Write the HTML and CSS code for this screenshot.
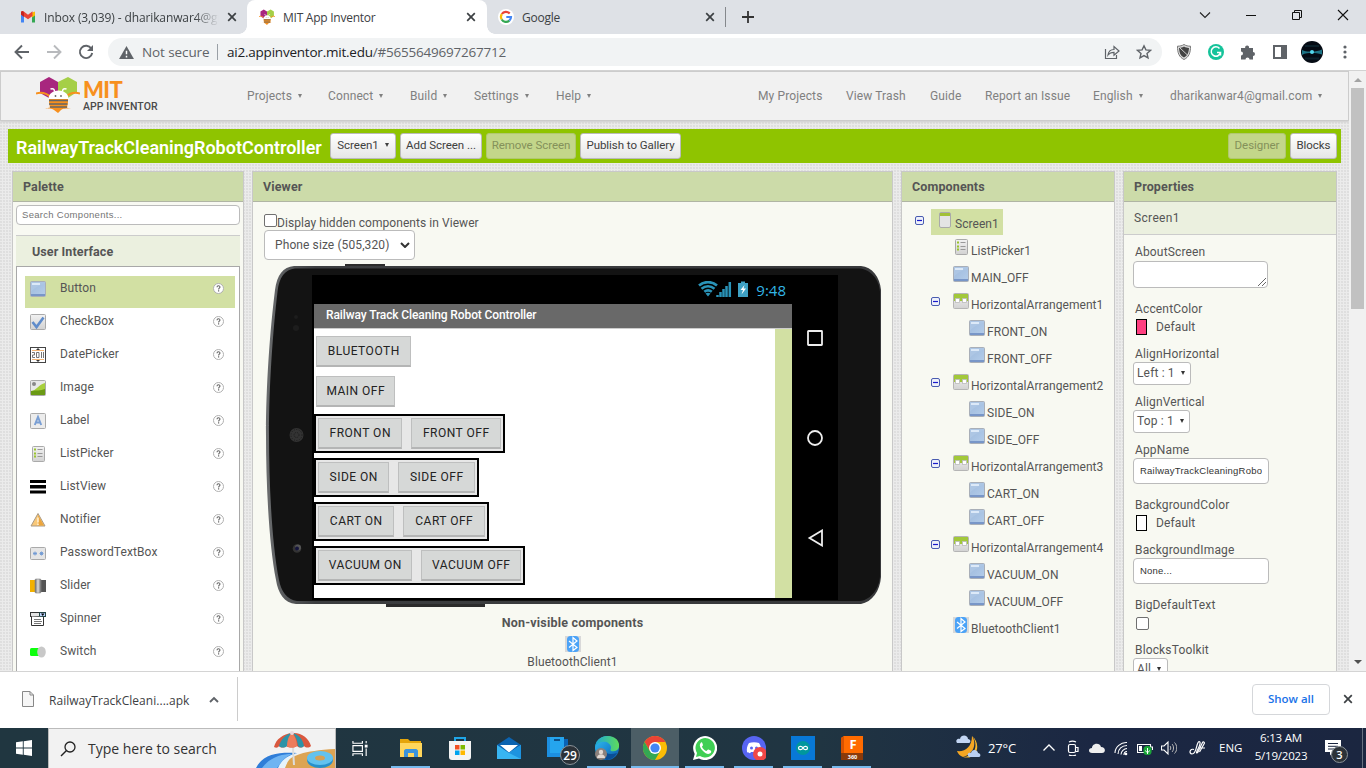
FILE: index.html
```html
<!DOCTYPE html>
<html lang="en">
<head>
<meta charset="utf-8">
<title>MIT App Inventor</title>
<link rel="stylesheet" href="styles.css">
</head>
<body>
<svg class="defs" width="0" height="0">
  <defs>
    <linearGradient id="gBlue" x1="0" y1="0" x2="1" y2="1"><stop offset="0" stop-color="#9db9dc"/><stop offset="1" stop-color="#b4cdea"/></linearGradient>
    <linearGradient id="gGray" x1="0" y1="0" x2="0" y2="1"><stop offset="0" stop-color="#f2f2f2"/><stop offset="1" stop-color="#d2d2d2"/></linearGradient>
    <linearGradient id="gEdge" x1="0" y1="0" x2="1" y2="1"><stop offset="0" stop-color="#35c1f1"/><stop offset=".5" stop-color="#1b8fd6"/><stop offset="1" stop-color="#0c59a4"/></linearGradient>
    <linearGradient id="gEdge2" x1="0" y1="0" x2="1" y2="0"><stop offset="0" stop-color="#1ba7d8"/><stop offset="1" stop-color="#5fdc5a"/></linearGradient>
    <linearGradient id="gMetal" x1="0" y1="0" x2="1" y2="0"><stop offset="0" stop-color="#666"/><stop offset=".5" stop-color="#ddd"/><stop offset="1" stop-color="#666"/></linearGradient>
    <linearGradient id="gRim" x1="0" y1="0" x2="1" y2="0"><stop offset="0" stop-color="#6a6c6e"/><stop offset=".08" stop-color="#3c3e40"/><stop offset="1" stop-color="#38393b"/></linearGradient>
    <symbol id="close" viewBox="0 0 10 10"><path d="M1.2 1.2l7.6 7.6M8.8 1.2L1.2 8.8" stroke="currentColor" stroke-width="1.7" fill="none"/></symbol>
    <symbol id="button" viewBox="0 0 16 16"><rect x=".5" y=".5" width="15" height="15" rx="1" fill="url(#gBlue)" stroke="#a9afb8"/><path d="M1 1h14v2C9 4 4 7 1 11z" fill="#adc6e4"/><path d="M2 2h8v2H2z" fill="#dce9f8"/><path d="M1 13h14v2H1z" fill="#7896c8"/></symbol>
    <symbol id="listpicker" viewBox="0 0 16 16"><rect x="2.5" y=".5" width="12" height="15" rx="1" fill="url(#gGray)" stroke="#aaa"/><path d="M4 3.500h2M4 7.500h2M4 10.500h2" stroke="#9ac52c" stroke-width="2"/><path d="M7.500 3.500h5M7.500 7.500h5M7.500 10.500h5" stroke="#999"/></symbol>
    <symbol id="harr" viewBox="0 0 16 16"><rect x=".5" y=".5" width="15" height="15" rx="1" fill="url(#gGray)" stroke="#b5b5b5"/><path d="M1 1h14v7H1z" fill="#a2c83a"/><rect x="2.500" y="5.500" width="4" height="4" fill="#fff" stroke="#bbb" stroke-width=".8"/><rect x="9.500" y="5.500" width="4" height="4" fill="#fff" stroke="#bbb" stroke-width=".8"/></symbol>
    <symbol id="screen" viewBox="0 0 16 16"><rect x="2.500" y=".5" width="11" height="15" rx="1.500" fill="#e4e4e4" stroke="#aaa"/><path d="M3 1h10v3H3z" fill="#a2c037"/></symbol>
    <symbol id="bt" viewBox="0 0 16 16"><path d="M0 0h16v16H0z" fill="#d9d9d9"/><rect x="2" y="0" width="12" height="16" rx="3.500" fill="#4ba3f7"/><path d="M4 5l8 6.500L8 14.500v-13L12 5l-8 6.500" fill="none" stroke="#fff" stroke-width="1.200"/></symbol>
    <symbol id="minus" viewBox="0 0 9 9"><rect x=".5" y=".5" width="8" height="8" rx="1.500" fill="#eef1fa" stroke="#4a5cb0"/><path d="M2 4.500h5" stroke="#1a1acc" stroke-width="1.200"/></symbol>
    <symbol id="checkbox" viewBox="0 0 16 16"><rect x=".5" y=".5" width="15" height="15" rx="1" fill="url(#gGray)" stroke="#aaa"/><path d="M2.500 8l4 5L13.500 3.500" fill="none" stroke="#5f8ccb" stroke-width="2.600"/></symbol>
    <symbol id="datepicker" viewBox="0 0 16 16"><rect x=".5" y=".5" width="15" height="15" fill="#fff" stroke="#444"/><path d="M2 3.500h12M2 12.500h12" stroke="#f4b677"/><path d="M6 3l2-2 2 2zM6 13l2 2 2-2z" fill="#333"/><path d="M2 5.500h2.500V8H2.500v2.500H5M6.500 5.500h2.500v5H6.500zM11.500 5v6M13.500 5v6" stroke="#777" fill="none"/></symbol>
    <symbol id="image" viewBox="0 0 16 16"><rect x=".5" y=".5" width="15" height="15" rx="1" fill="#e8e8e8" stroke="#aaa"/><circle cx="4" cy="4" r="2" fill="#888"/><path d="M1 11c5 0 8-7 14-8v12H1z" fill="#a7cf3c"/><path d="M1 11c6-1 9 0 14-2v6H1z" fill="#6b9a15"/></symbol>
    <symbol id="label" viewBox="0 0 16 16"><rect x=".5" y=".5" width="15" height="15" rx="1" fill="#ececec" stroke="#aaa"/><path d="M4.800 12L8 4l3.200 8M6 9.500h4" fill="none" stroke="#7a9fd4" stroke-width="2"/></symbol>
    <symbol id="listview" viewBox="0 0 16 16"><path d="M0 1h16v3H0zM0 6h16v3.500H0zM0 11.500h16v3H0z"/></symbol>
    <symbol id="notifier" viewBox="0 0 16 16"><path d="M8 1.500L1 14h14z" fill="#f9c878" stroke="#a99a86" stroke-linejoin="round"/><path d="M8 3l6 10.500H8z" fill="#eca53c"/><path d="M8 5.500v5M8 11.500v1.500" stroke="#fff1d8" stroke-width="1.500"/></symbol>
    <symbol id="password" viewBox="0 0 16 16"><rect x=".5" y="2.500" width="15" height="12" rx="1" fill="#e5e5e5" stroke="#aaa"/><path d="M3 8.500h4M5 6.500v4M3.500 7l3 3M6.500 7l-3 3M9.500 8.500h4M11.500 6.500v4M10 7l3 3M13 7l-3 3" stroke="#6f98d2" stroke-width=".9"/></symbol>
    <symbol id="slider" viewBox="0 0 16 16"><path d="M0 2h5v12H0z" fill="#f2b100"/><path d="M11 2h5v12h-5z" fill="#555"/><rect x="5" y="1" width="6" height="14" rx="1" fill="url(#gMetal)" stroke="#888" stroke-width=".6"/></symbol>
    <symbol id="spinner" viewBox="0 0 16 16"><rect x=".5" y="1.500" width="15" height="4" fill="#e3e3e3" stroke="#333"/><path d="M9 1h7v5H9z" fill="#244"/><path d="M10 2h5v3h-5z" fill="#bdd5ff"/><path d="M11 2.500h3.500L12.700 5z" fill="#000"/><path d="M1.500 5.500v9h12V6" fill="#fff" stroke="#333"/><path d="M4 8.500h7M4 10.500h8M4 12.500h7" stroke="#777"/></symbol>
    <symbol id="switch" viewBox="0 0 16 16"><rect x="0" y="4" width="12" height="8" rx="1.500" fill="#0dff0d"/><ellipse cx="11.500" cy="8" rx="4.300" ry="5.500" fill="#c8c8c8"/></symbol>
    <symbol id="help" viewBox="0 0 11 11"><circle cx="5.500" cy="5.500" r="5" fill="#fff" stroke="#b0b0b0"/><path d="M4 4.300c0-2 3-2 3-.2 0 1.100-1.400 1.100-1.400 2.300" fill="none" stroke="#666" stroke-width="1.100"/><path d="M5 7.300h1.200v1.200H5z" fill="#666"/></symbol>
    <symbol id="bee" viewBox="0 0 44 37" preserveAspectRatio="none"><path d="M13 1l9 5v10l-9 6-9-5V6z" fill="#a8267e"/><path d="M32 1l9 5v10l-9 6-10-6V6z" fill="#a5cf47"/><path d="M0 17.500c7-2 11 0 15 4M44 17.500c-7-2-11 0-15 4" fill="none" stroke="#f7901e" stroke-width="2"/><path d="M9 32c4 0 7 0 8-4h10c2 4 4 4 8 4-5 1-8 0-10 2l-3 3-4-3c-2-2-6-1-9-2z" fill="#f7901e"/><path d="M13 23h19v3l-1 6H14l-1-6z" fill="#f7901e"/><path d="M13 24.500h19M13 28h18.500M14 31h17" stroke="#666" stroke-width="1.400"/><path d="M12.500 23c0-11.500 20-11.500 20 0z" fill="#fff"/><path d="M18.500 15.500c0-2-1-3.500-4-2.500M26.500 15.500c0-2 1-3.500 4-2.500" fill="none" stroke="#fff" stroke-width="1.400"/><circle cx="19.500" cy="20" r=".9" fill="#666"/><circle cx="25" cy="20" r=".9" fill="#666"/></symbol>
  </defs>
</svg>

<header class="tabs">
  <div class="tab">
    <svg class="fav" viewBox="0 0 16 16"><path d="M1 3.500v10h3V7.500z" fill="#4285f4"/><path d="M15 3.500v10h-3V7.500z" fill="#34a853"/><path d="M12 3.500l3-1v4l-3 2z" fill="#fbbc04"/><path d="M1 3c0-1 1.500-1.500 2.500-.700L8 5.700l4.500-3.400V7L8 10.300 1 5.500z" fill="#ea4335"/><path d="M1 3v2.500L4 8V3.500L2.500 2z" fill="#c5221f"/></svg>
    <span class="tab-title inbox">Inbox (3,039) - dharikanwar4@gm</span>
    <svg class="x"><use href="#close"/></svg>
  </div>
  <div class="tab active">
    <svg class="fav"><use href="#bee"/></svg>
    <span class="tab-title">MIT App Inventor</span>
    <svg class="x"><use href="#close"/></svg>
  </div>
  <div class="tab google">
    <svg class="fav" viewBox="0 0 16 16"><circle cx="8" cy="8" r="8" fill="#fff"/><g fill="none" stroke-width="2.200"><path d="M3.800 5A5 5 0 0 1 11.700 4.500" stroke="#ea4335"/><path d="M3.700 10.500A5 5 0 0 1 3.800 5.200" stroke="#fbbc05"/><path d="M3.700 10.500A5 5 0 0 0 11.300 11.700" stroke="#34a853"/><path d="M11.300 11.700A5 5 0 0 0 13 8H8.300" stroke="#4285f4"/></g></svg>
    <span class="tab-title">Google</span>
    <svg class="x"><use href="#close"/></svg>
  </div>
  <span class="tab-sep"></span>
  <svg class="plus" viewBox="0 0 12 12"><path d="M6 0v12M0 6h12" stroke="#333" stroke-width="1.800"/></svg>
  <div class="win">
    <svg viewBox="0 0 12 12"><path d="M1 3.500l5 5 5-5" fill="none" stroke="#222" stroke-width="1.100"/></svg>
    <svg viewBox="0 0 12 12"><path d="M1 6.500h10" stroke="#111"/></svg>
    <svg viewBox="0 0 12 12"><path d="M1.500 3.500h7v7h-7zM3.500 3V1.500h7v7H9" fill="none" stroke="#111"/></svg>
    <svg viewBox="0 0 12 12"><path d="M1 1l10 10M11 1L1 11" stroke="#111" stroke-width="1.100"/></svg>
  </div>
</header>

<div class="toolbar">
  <svg class="nav" viewBox="0 0 16 16"><path d="M15 8H2M8 1.500L1.500 8 8 14.500" fill="none" stroke="#5f6368" stroke-width="1.900"/></svg>
  <svg class="nav" viewBox="0 0 16 16"><path d="M1 8h13M8 1.500L14.500 8 8 14.500" fill="none" stroke="#b8babd" stroke-width="1.900"/></svg>
  <svg class="nav" viewBox="0 0 16 16"><path d="M13.300 4.500A6.200 6.200 0 1 0 14.200 9" fill="none" stroke="#5f6368" stroke-width="1.900"/><path d="M15 1v6H9z" fill="#5f6368"/></svg>
  <div class="omni">
    <svg class="warn" viewBox="0 0 16 14"><path d="M8 0l8 14H0z" fill="#5f6368"/><path d="M8 5v4M8 10.500v2" stroke="#fff" stroke-width="1.600"/></svg>
    <span class="notsec">Not secure</span><span class="omni-sep"></span>
    <span class="url"><b>ai2.appinventor.mit.edu</b>/#5655649697267712</span>
    <svg class="share" viewBox="0 0 16 16"><path d="M1.500 5v9.500h11V11M4 11c.5-4 3-5.500 6-5.500V2.500L15 7l-5 4.200V8.300C7.500 8.300 5.500 9 4 11z" fill="none" stroke="#5f6368" stroke-width="1.200"/></svg>
    <svg class="star" viewBox="0 0 16 16"><path d="M8 1.800l1.900 4.100 4.500.5-3.400 3 1 4.500L8 11.600l-4 2.300 1-4.500-3.400-3 4.500-.5z" fill="none" stroke="#5f6368" stroke-width="1.400"/></svg>
  </div>
  <svg class="ext" viewBox="0 0 16 16"><path d="M8 .5c2 1.300 4 1.700 6.500 1.700C14.500 9 13 13 8 15.500 3 13 1.500 9 1.500 2.200 4 2.200 6 1.800 8 .5z" fill="#ddd" stroke="#777"/><path d="M8 2.500c2 1 3 1.300 5 1.400-.3 5-1.500 7.600-5 9.600-3.500-2-4.700-4.600-5-9.600C5 3.800 6 3.500 8 2.500z" fill="#444"/><path d="M4 4l8 7.500" stroke="#ccc"/></svg>
  <svg class="ext" viewBox="0 0 16 16"><circle cx="8" cy="8" r="8" fill="#15c39a"/><path d="M11.500 4.500A4.700 4.700 0 1 0 12.500 8.500H9M12.500 8.300v3.200" fill="none" stroke="#fff" stroke-width="1.500"/></svg>
  <svg class="ext" viewBox="0 0 16 16"><path d="M1 4h4.200a2 2 0 1 1 3.800 0h4v4a2 2 0 1 1 0 4v3.500H9.500a2 2 0 0 0-4 0H1v-4a2 2 0 0 0 0-4z" fill="#5f6368"/></svg>
  <svg class="ext" viewBox="0 0 16 16"><path d="M2 2h12v12H2z" fill="none" stroke="#5f6368" stroke-width="2"/><path d="M9 2h5v12H9z" fill="#5f6368"/></svg>
  <svg class="avatar" viewBox="0 0 22 22"><circle cx="11" cy="11" r="11" fill="#050b14"/><path d="M1 9c4 2 7 1.500 10 1.500S18 10 21 8.500v5c-4-1.500-7-1.500-10-1.500s-7 0-10 2z" fill="#1c7486"/><path d="M4 5h14M4 17.500h14" stroke="#0b202a" stroke-width="2"/><circle cx="11" cy="11" r="2" fill="#54d8ee"/></svg>
  <svg class="dots" viewBox="0 0 4 16"><g fill="#5f6368"><circle cx="2" cy="3" r="1.600"/><circle cx="2" cy="8" r="1.600"/><circle cx="2" cy="13" r="1.600"/></g></svg>
</div>

<div class="viewport">
<main class="page">
  <div class="top">
    <svg class="logo"><use href="#bee"/></svg>
    <div class="brand"><b>MIT</b><span>APP INVENTOR</span></div>
    <nav class="menu">
      <a class="dd">Projects</a><a class="dd">Connect</a><a class="dd">Build</a><a class="dd">Settings</a><a class="dd">Help</a>
    </nav>
    <nav class="menu right">
      <a>My Projects</a><a>View Trash</a><a>Guide</a><a>Report an Issue</a><a class="dd">English</a><a class="dd">dharikanwar4@gmail.com</a>
    </nav>
  </div>

  <div class="project">
    <h1>RailwayTrackCleaningRobotController</h1>
    <button class="b1 dd">Screen1</button><button class="b2">Add Screen ...</button><button class="b3 off">Remove Screen</button><button class="b4">Publish to Gallery</button>
    <span class="grow"></span>
    <button class="b5 off">Designer</button><button class="b6">Blocks</button>
  </div>

  <div class="columns">
    <section class="panel">
      <h2>Palette</h2>
      <div class="pal">
        <div class="search">Search Components...</div>
        <h3>User Interface</h3>
        <ul class="items">
          <li class="sel"><svg><use href="#button"/></svg><span>Button</span><svg class="q"><use href="#help"/></svg></li>
          <li><svg><use href="#checkbox"/></svg><span>CheckBox</span><svg class="q"><use href="#help"/></svg></li>
          <li><svg><use href="#datepicker"/></svg><span>DatePicker</span><svg class="q"><use href="#help"/></svg></li>
          <li><svg><use href="#image"/></svg><span>Image</span><svg class="q"><use href="#help"/></svg></li>
          <li><svg><use href="#label"/></svg><span>Label</span><svg class="q"><use href="#help"/></svg></li>
          <li><svg><use href="#listpicker"/></svg><span>ListPicker</span><svg class="q"><use href="#help"/></svg></li>
          <li><svg><use href="#listview"/></svg><span>ListView</span><svg class="q"><use href="#help"/></svg></li>
          <li><svg><use href="#notifier"/></svg><span>Notifier</span><svg class="q"><use href="#help"/></svg></li>
          <li><svg><use href="#password"/></svg><span>PasswordTextBox</span><svg class="q"><use href="#help"/></svg></li>
          <li><svg><use href="#slider"/></svg><span>Slider</span><svg class="q"><use href="#help"/></svg></li>
          <li><svg><use href="#spinner"/></svg><span>Spinner</span><svg class="q"><use href="#help"/></svg></li>
          <li><svg><use href="#switch"/></svg><span>Switch</span><svg class="q"><use href="#help"/></svg></li>
        </ul>
      </div>
    </section>

    <section class="panel">
      <h2>Viewer</h2>
      <div class="viewer">
        <div class="hidden-row"><i class="cb"></i><span>Display hidden components in Viewer</span></div>
        <div class="size"><span>Phone size (505,320)</span><svg viewBox="0 0 10 6"><path d="M1 1l4 4 4-4" fill="none" stroke="#333" stroke-width="2"/></svg></div>
        <div class="phone">
          <svg class="body" viewBox="0 0 620 342">
            <path d="M81 2V-1h40V2zM122 339h99v3h-99z" fill="#2c2c2c"/>
            <path d="M30 1H597C608 2 616 12 617 25V312C616 326 608 337 597 339H32C20 338 14 328 12 315C5 280 2 220 2 170C2 120 6 65 11 25C13 10 19 2 30 1z" fill="url(#gRim)"/>
            <path d="M31 3.500H596C606 4.500 615.500 14 616 27V311C615.500 323 607 335 596 336H33C23 335 17 326 15 315C8 280 5 220 5 170C5 120 9 65 13.500 27C15 12 21 4.500 31 3.500z" fill="#131313"/>
            <circle cx="32.500" cy="170" r="7" fill="#333"/><circle cx="32.500" cy="170" r="5.500" fill="none" stroke="#1d1d1d" stroke-dasharray="1 1.500"/><circle cx="32.500" cy="170" r="2.500" fill="none" stroke="#1d1d1d" stroke-dasharray="1 1"/>
            <circle cx="33" cy="283.500" r="4.300" fill="#333"/><circle cx="34" cy="282.500" r="3" fill="#555"/><circle cx="33" cy="283.500" r="2" fill="#14143c"/><circle cx="32" cy="63" r="3" fill="#1d1d1d"/><circle cx="32" cy="52" r="2" fill="#1d1d1d"/>
          </svg>
          <div class="glass">
            <div class="device">
              <div class="status">
                <svg class="sig" viewBox="0 0 54 16"><g fill="none" stroke="#2a93b8" stroke-width="2.600"><path d="M1 4.500c5-4.500 13-4.500 18 0M3.500 7.800c4-3.300 9-3.300 13 0M6.300 10.800c2.500-2 5-2 7.500 0"/></g><path d="M7.500 12.500c1.500-1 3.500-1 5 0L10 15.500z" fill="#2a93b8"/><path d="M19.500 16v-2M22.500 16v-5M25.500 16V8M28.500 16V5M31.800 16V1" stroke="#2a93b8" stroke-width="2.500"/><path d="M40 2h3V.5h4V2h3v14H40z" fill="#3ea1c4"/><path d="M46.500 4L42.500 9h2.500l-1.500 4.500 4.500-6h-2.500z" fill="#fff"/></svg>
                <span>9:48</span>
              </div>
              <div class="title">Railway Track Cleaning Robot Controller</div>
              <div class="form">
                <div class="comps">
                  <div class="ab w95">BLUETOOTH</div>
                  <div class="ab w79">MAIN OFF</div>
                  <div class="arr"><div class="ab w84">FRONT ON</div><div class="ab w90">FRONT OFF</div></div>
                  <div class="arr"><div class="ab w71">SIDE ON</div><div class="ab w77">SIDE OFF</div></div>
                  <div class="arr"><div class="ab w76">CART ON</div><div class="ab w82">CART OFF</div></div>
                  <div class="arr"><div class="ab w94">VACUUM ON</div><div class="ab w100">VACUUM OFF</div></div>
                </div>
                <div class="strip"></div>
              </div>
            </div>
            <div class="keys">
              <svg viewBox="0 0 16 18"><rect x="1" y="2" width="14" height="14" rx=".5" fill="none" stroke="#eee" stroke-width="1.800"/></svg>
              <svg viewBox="0 0 16 18"><circle cx="8" cy="9" r="7" fill="none" stroke="#eee" stroke-width="1.800"/></svg>
              <svg viewBox="0 0 16 18"><path d="M15 1.500v15L2.500 9z" fill="none" stroke="#eee" stroke-width="1.800"/></svg>
            </div>
          </div>
        </div>
        <div class="nonvis"><b>Non-visible components</b><svg><use href="#bt"/></svg><span>BluetoothClient1</span></div>
      </div>
    </section>

    <section class="panel">
      <h2>Components</h2>
      <ul class="tree">
        <li class="l0"><svg class="m"><use href="#minus"/></svg><span class="node picked"><svg><use href="#screen"/></svg><span>Screen1</span></span></li>
        <li class="l1"><span class="node"><svg><use href="#listpicker"/></svg><span>ListPicker1</span></span></li>
        <li class="l1"><span class="node"><svg><use href="#button"/></svg><span>MAIN_OFF</span></span></li>
        <li class="l1 open"><svg class="m"><use href="#minus"/></svg><span class="node"><svg><use href="#harr"/></svg><span>HorizontalArrangement1</span></span></li>
        <li class="l2"><span class="node"><svg><use href="#button"/></svg><span>FRONT_ON</span></span></li>
        <li class="l2"><span class="node"><svg><use href="#button"/></svg><span>FRONT_OFF</span></span></li>
        <li class="l1 open"><svg class="m"><use href="#minus"/></svg><span class="node"><svg><use href="#harr"/></svg><span>HorizontalArrangement2</span></span></li>
        <li class="l2"><span class="node"><svg><use href="#button"/></svg><span>SIDE_ON</span></span></li>
        <li class="l2"><span class="node"><svg><use href="#button"/></svg><span>SIDE_OFF</span></span></li>
        <li class="l1 open"><svg class="m"><use href="#minus"/></svg><span class="node"><svg><use href="#harr"/></svg><span>HorizontalArrangement3</span></span></li>
        <li class="l2"><span class="node"><svg><use href="#button"/></svg><span>CART_ON</span></span></li>
        <li class="l2"><span class="node"><svg><use href="#button"/></svg><span>CART_OFF</span></span></li>
        <li class="l1 open"><svg class="m"><use href="#minus"/></svg><span class="node"><svg><use href="#harr"/></svg><span>HorizontalArrangement4</span></span></li>
        <li class="l2"><span class="node"><svg><use href="#button"/></svg><span>VACUUM_ON</span></span></li>
        <li class="l2"><span class="node"><svg><use href="#button"/></svg><span>VACUUM_OFF</span></span></li>
        <li class="l1"><span class="node"><svg><use href="#bt"/></svg><span>BluetoothClient1</span></span></li>
      </ul>
    </section>

    <section class="panel">
      <h2>Properties</h2>
      <div class="subject">Screen1</div>
      <div class="props">
        <div class="prop h57"><label>AboutScreen</label><div class="area"><svg viewBox="0 0 10 10"><path d="M1 9l8-8M5 9l4-4" stroke="#555" stroke-width=".9"/></svg></div></div>
        <div class="prop h45"><label>AccentColor</label><div class="color"><i class="pink"></i>Default</div></div>
        <div class="prop h48"><label>AlignHorizontal</label><div class="drop w58">Left : 1</div></div>
        <div class="prop h48"><label>AlignVertical</label><div class="drop w57">Top : 1</div></div>
        <div class="prop h55"><label>AppName</label><div class="text"><span>RailwayTrackCleaningRobotController</span></div></div>
        <div class="prop h45"><label>BackgroundColor</label><div class="color"><i></i>Default</div></div>
        <div class="prop h55"><label>BackgroundImage</label><div class="text"><span>None...</span></div></div>
        <div class="prop h45"><label>BigDefaultText</label><div><i class="cb small"></i></div></div>
        <div class="prop h45"><label>BlocksToolkit</label><div class="drop w35">All</div></div>
      </div>
    </section>
  </div>
</main>
<aside class="scroll"><i class="up"></i><div class="thumb"></div><i class="down"></i></aside>
</div>

<div class="downloads">
  <svg class="file" viewBox="0 0 12 16"><path d="M.5.500h7.500l3.500 3.500v11.500H.5z" fill="#f6f6f6" stroke="#888"/><path d="M8 .5V4h3.500" fill="none" stroke="#888"/></svg>
  <span class="fname">RailwayTrackCleani....apk</span>
  <svg class="caret" viewBox="0 0 10 7"><path d="M1 6l4-4 4 4" fill="none" stroke="#5f6368" stroke-width="1.900"/></svg>
  <span class="dl-sep"></span>
  <span class="grow"></span>
  <span class="showall">Show all</span>
  <svg class="x"><use href="#close"/></svg>
</div>

<footer class="taskbar">
  <div class="start"><svg viewBox="0 0 16 16"><path d="M0 2.300L6.800 1.300v6.200H0zM7.700 1.200L16 0v7.500H7.700zM0 8.400h6.800v6.300L0 13.700zM7.700 8.400H16V16l-8.300-1.200z" fill="#fff"/></svg></div>
  <div class="find">
    <svg class="mag" viewBox="0 0 16 16"><circle cx="10" cy="6" r="5" fill="none" stroke="#222" stroke-width="1.300"/><path d="M6.500 9.500L1 15" stroke="#222" stroke-width="1.400"/></svg>
    <span>Type here to search</span>
    <svg class="beach" viewBox="0 0 79 38"><path d="M26 38C32 27 42 21 79 19V38z" fill="#dda453"/><path d="M0 38C7 24 22 22 41 23C30 28 30 33 27 38z" fill="#2f7dd8"/><path d="M6 38C14 27 26 24 36 24C26 29 25 33 21 38z" fill="#6fb4f2"/><path d="M22 38C25 31 30 26 41 23C32 29 31 33 29 38z" fill="#e6f3fb"/><path d="M36 2l2 33" stroke="#ddd" stroke-width="2"/><path d="M18 17C20 9 27 4 36 3s17 5 19 13c-2 2-5 2-7 0-2 2-5 2-7 0-3 2-8 2-11 0-2 2-5 2-7 0-1 2-3 2-5 1z" fill="#d9583f"/><path d="M23 16C25 9 30 4 36 3l-5 13c-2 2-6 2-8 0zM42 16C41 9 39 5 36 3c6 1 11 6 12 13-2 2-4 2-6 0z" fill="#2d93a8"/><path d="M31 16C31 9 34 4 36 3c3 3 5 8 5 13-3 2-7 2-10 0z" fill="#ee7c5c"/><circle cx="36" cy="3" r="2" fill="#e9d8e0"/><ellipse cx="64" cy="30" rx="13" ry="8" fill="#2690cb"/><ellipse cx="64" cy="28" rx="13" ry="7" fill="#63c2ee"/><ellipse cx="64" cy="28" rx="5" ry="2.500" fill="#d5a056"/></svg>
  </div>
  <div class="apps">
    <span class="tv"><svg class="s18" viewBox="0 0 18 18"><g fill="none" stroke="#fff" stroke-width="1.200"><path d="M1 1v2.500h10V1M1 17v-2.500h10V17M1 6h10v6H1zM15 1v2.500M15 9v8"/></g><path d="M13.500 5h3v3h-3z" fill="#fff"/></svg></span>
    <span class="run"><svg viewBox="0 0 24 24"><path d="M1 3h8l2 2h11v6H1z" fill="#e5a50a"/><path d="M1 7h22v14H1z" fill="#ffd65c"/><path d="M5 21v-6c0-1 1-2 2-2h10c1 0 2 1 2 2v6h-4v-4H9v4z" fill="#3a93dc"/></svg></span>
    <span><svg viewBox="0 0 24 24"><path d="M7 7V2h10v5" fill="none" stroke="#1fa6e8" stroke-width="2"/><path d="M1 5h22v16c0 2-1 3-3 3H4c-2 0-3-1-3-3z" fill="#f4f4f4"/><path d="M7 9h4.500v4.500H7z" fill="#f25022"/><path d="M12.500 9H17v4.500h-4.500z" fill="#7fba00"/><path d="M7 14.500h4.500V19H7z" fill="#00a4ef"/><path d="M12.500 14.500H17V19h-4.500z" fill="#ffb900"/></svg></span>
    <span><svg viewBox="0 0 24 24"><path d="M0 9L12 1l12 8v14H0z" fill="#0b63b0"/><path d="M3 9h18l-9 7.500z" fill="#fff"/><path d="M0 9l12 8L24 9v14H0z" fill="#38b5f2"/><path d="M24 9v14L12 17z" fill="#1d93df"/></svg></span>
    <span class="badged"><svg viewBox="0 0 24 24"><path d="M6 3h16v18H6z" fill="#0a63b5"/><path d="M1 1h17v20H1z" fill="#1c8fe0"/><path d="M4 1h14v16H4z" fill="#25a5ee"/><path d="M8 4h6" stroke="#083c70" stroke-width="1.600"/></svg><i class="badge">29</i></span>
    <span class="run"><svg viewBox="0 0 24 24"><circle cx="12" cy="12" r="12" fill="url(#gEdge)"/><path d="M0 11C1 3 8 0 13 0c8 0 12 6 11 11-1 4-5 5-8 4-1-1 0-2 0-4-1-4-5-6-9-5-3 0-6 3-7 5z" fill="url(#gEdge2)"/><path d="M9 13c1 5 6 6 13 4-3 5-7 7-11 7-3-3-4-7-2-11z" fill="#0a4e96"/><circle cx="6" cy="18" r="6" fill="#8b817c"/><circle cx="6" cy="16" r="2.200" fill="#e2dad4"/><path d="M2 22c0-5 8-5 8 0z" fill="#e2dad4"/></svg></span>
    <span class="run on"><svg viewBox="0 0 24 24"><circle cx="12" cy="12" r="12" fill="#fbbc05"/><path d="M1.600 6A12 12 0 0 1 22.400 6H12l-5.200 9z" fill="#ea4335"/><path d="M1.600 6A12 12 0 0 0 12 24l5.200-9H6.800z" fill="#34a853"/><circle cx="12" cy="12" r="6" fill="#fff"/><circle cx="12" cy="12" r="4.600" fill="#4285f4"/></svg></span>
    <span class="run"><svg viewBox="0 0 24 24"><path d="M0 24l1.700-6A12 12 0 1 1 6 22.400z" fill="#fff"/><path d="M3 21l1-4A9.700 9.700 0 1 1 7 20z" fill="#3fcf54"/><path d="M8 6.500c-3 3 .5 7 2 8.500 3 3 6 4 8 1.500.6-1.500.3-1.700-2.500-3-1-.3-1.500 1.500-2.200 1.500-1.300-.4-3.600-2.500-4.300-4.300.3-.7 1-1 1-1.700C9.200 6.500 9 6 8 6.500z" fill="#fff"/></svg></span>
    <span class="run"><svg viewBox="0 0 24 24"><circle cx="12" cy="12" r="12" fill="#5865f2"/><path d="M7 7c3-1 7-1 10 0 2 3 2.500 6 2 9-1 1-2 1-3 1.300L15 16H9l-1 1.300C7 17 6 17 5 16c-.5-3 0-6 2-9z" fill="#fff"/><circle cx="9.500" cy="12" r="1.500" fill="#5865f2"/><circle cx="14.500" cy="12" r="1.500" fill="#5865f2"/><circle cx="18" cy="18" r="7" fill="#f04747"/><circle cx="18" cy="18" r="2.500" fill="#fff"/></svg></span>
    <span class="run"><svg viewBox="0 0 24 24"><path d="M0 0h24v24H0z" fill="#0878d7"/><circle cx="12" cy="12" r="7" fill="#00979d"/><path d="M12 12c-1.300-2.500-4.500-2-4.500 0s3.200 2.500 4.500 0c1.300-2.500 4.500-2 4.500 0s-3.200 2.500-4.500 0z" fill="none" stroke="#fff" stroke-width="1.200"/></svg></span>
    <span class="run"><svg viewBox="0 0 24 24"><path d="M1 2l3-2h19v24H1z" fill="#ff6b00"/><path d="M1 17h22v7H1z" fill="#8a3a0a"/><path d="M1 2l3-2v17H1z" fill="#d85200"/><text x="13" y="13" class="f">F</text><text x="12.500" y="22.500" class="f2">360</text></svg></span>
  </div>
  <div class="tray">
    <svg class="wx" viewBox="0 0 26 26"><path d="M17 2c6 6 5 20-9 21 14 4 19-13 9-21z" fill="#f8b62c"/><path d="M17 2c4 5 4 17-9 21-3-1-5-3-6-6 8 1 15-4 15-15z" fill="#f5a623"/><path d="M2 9c-2-3 1-5 3-4 1-5 8-4 8 0 3 0 3 4 1 4z" fill="#c3d6f3"/><path d="M14 23c-3-3 0-5 2-4 1-5 7-3 7 0 3 0 3 4 1 4z" fill="#b7cef2"/></svg>
    <span class="temp">27°C</span>
    <svg class="t1" viewBox="0 0 16 16"><path d="M2.500 10.500L8 5l5.500 5.500" fill="none" stroke="#fff" stroke-width="1.300"/></svg>
    <svg class="t2" viewBox="0 0 16 16"><g fill="none" stroke="#fff" stroke-width="1.200"><rect x="3.500" y="4.500" width="7" height="8" rx="1.500"/><path d="M10.500 7.500h2.500v4h-2.500M4 2c2-1 5-1 7 0M4 15c2 1 5 1 7 0"/></g></svg>
    <svg class="t3" viewBox="0 0 16 16"><path d="M3 13c-4 0-4-5 0-5 0-5 8-6 9-1 5 0 5 6 1 6z" fill="#eee"/></svg>
    <svg class="t4" viewBox="0 0 16 16"><g fill="none" stroke="#fff" stroke-width="1.100"><path d="M2 13C2 7 8 2 14 2.500M5 14c0-5 4-8.500 9-8.500M8 14.500c0-3 3-6 6-6M11 15c0-2 1-3.500 3-3.500"/></g><circle cx="13" cy="14" r="1.300" fill="#fff"/></svg>
    <svg class="t5" viewBox="0 0 16 16"><path d="M.5 4.500h13v8H.5zM13.500 7h2v3" fill="none" stroke="#fff" stroke-width="1.100"/><path d="M2 6h3v5H2z" fill="#fff"/><rect x="6.500" y="6" width="8" height="9" rx="3.500" fill="#19a637"/><path d="M10.500 8v6M8.500 10.500c0 2 4 2 4 0" stroke="#fff" fill="none"/></svg>
    <svg class="t6" viewBox="0 0 16 16"><path d="M.5 6h2.500l4-4v12l-4-4H.5z" fill="none" stroke="#fff" stroke-width="1.100"/><path d="M9 6c1 1 1 3 0 4M11 4c2 2 2 6 0 8M13.500 2.500c3 3 3 8 0 11" fill="none" stroke="#bbb"/></svg>
    <svg class="t7" viewBox="0 0 16 16"><path d="M5 9.500c-4-1.500-5.500 4-2 4.500C8 14 7 3 10 1.500c2 0 1 4-1 7.500s-2 5 0 3L13.500 2.500c1-1.500 2.500 0 1.500 1.500L10.500 12M11 8h5" fill="none" stroke="#fff" stroke-width="1.200"/></svg>
    <span class="eng">ENG</span>
    <span class="clock"><span>6:13 AM</span><span>5/19/2023</span></span>
    <span class="notif"><svg viewBox="0 0 16 16"><path d="M0 0h16v12H8l-3 3.500V12H0z" fill="#fff"/><path d="M3 3.500h10M3 6.300h10M3 9h7" stroke="#1b2640"/></svg><i class="badge">3</i></span>
    <span class="edge"></span>
  </div>
</footer>
</body>
</html>
```
FILE: styles.css
```css
* { box-sizing: border-box; }
body { margin: 0; width: 1366px; height: 768px; overflow: hidden; display: flex; flex-direction: column; background: #fff; font-family: Roboto, "Liberation Sans", sans-serif; font-size: 12px; color: #555; }
svg { display: block; flex: none; }
.defs { position: absolute; }
ul { list-style: none; margin: 0; padding: 0; }
i { font-style: normal; }
.grow { flex: 1; }

/* tab strip */
.tabs { height: 34px; flex: none; background: #dee1e6; display: flex; align-items: center; font-family: "Open Sans", "Noto Sans", sans-serif; font-size: 12px; color: #3c4043; }
.tab { width: 247px; height: 34px; display: flex; align-items: center; padding: 0 10px 0 20px; flex: none; }
.tab.active { width: 240px; background: #fff; border-radius: 8px 8px 0 0; padding: 0 11px 0 12px; position: relative; }
.tab.active::before, .tab.active::after { content: ""; position: absolute; bottom: 0; width: 8px; height: 8px; left: -8px; background: radial-gradient(circle at 0 0, #dee1e6 7.500px, #fff 8px); }
.tab.active::after { left: auto; right: -8px; background: radial-gradient(circle at 100% 0, #dee1e6 7.500px, #fff 8px); }
.tab.google { width: 238px; padding: 0 10px 0 11px; }
.fav { width: 16px; height: 16px; }
.tab-title { flex: 1; margin-left: 8px; white-space: nowrap; overflow: hidden; letter-spacing: -.25px; }
.tab-title.inbox { margin-right: 8px; -webkit-mask-image: linear-gradient(90deg, #000 86%, transparent); mask-image: linear-gradient(90deg, #000 86%, transparent); letter-spacing: -.12px; }
.x { width: 10px; height: 10px; color: #3c4043; }
.tab-sep { width: 1px; height: 20px; background: #85888c; }
.plus { width: 12px; height: 12px; margin-left: 16px; }
.win { margin-left: auto; display: flex; gap: 34px; padding-right: 17px; margin-bottom: 5px; }
.win svg { width: 12px; height: 12px; }

/* address row */
.toolbar { height: 37px; flex: none; display: flex; align-items: center; border-bottom: 1px solid #d2d2d2; padding-left: 14px; font-family: "Open Sans", "Noto Sans", sans-serif; font-size: 13.500px; color: #5f6368; }
.nav { width: 16px; height: 16px; margin-right: 16px; }
.omni { width: 1054px; height: 28px; margin-left: -2px; margin-right: 14px; border-radius: 14px; background: #f1f3f4; display: flex; align-items: center; padding: 0 10px 0 11px; }
.warn { width: 15px; height: 13px; }
.notsec { width: 75px; margin-left: 8px; padding-bottom: 1px; white-space: nowrap; letter-spacing: -.1px; }
.omni-sep { width: 1px; height: 16px; background: #9aa0a6; }
.url { flex: 1; margin-left: 9px; padding-bottom: 1px; letter-spacing: -.22px; }
.url b { font-weight: 400; color: #202124; }
.share { width: 16px; height: 16px; margin-right: 16px; }
.star { width: 16px; height: 16px; }
.ext { width: 16px; height: 16px; margin-right: 16px; }
.avatar { width: 22px; height: 22px; margin: 0 20px 0 -3px; }
.dots { width: 4px; height: 16px; }

.viewport { height: 600px; flex: none; display: flex; overflow: hidden; }
.page { width: 1349px; height: 600px; overflow: hidden; background-color: #ebebeb; background-image: radial-gradient(circle at 1px 1px, #dadada .6px, transparent 1px); background-size: 3px 3px; }
.scroll { width: 17px; background: #f1f1f1; display: flex; flex-direction: column; align-items: center; }
.up, .down { border: 4px solid transparent; border-top: 0; border-bottom: 4px solid #a3a3a3; margin: 7px 0 6px; }
.thumb { width: 13px; height: 221px; background: #c1c1c1; }
.down { border-bottom: 0; border-top: 4px solid #505050; margin: auto 0 7px; }

/* site header */
.top { height: 50px; background: #f1f1f1; border: 1px solid #ccc; display: flex; align-items: center; padding-left: 35px; box-shadow: 0 1px 2px #ccc; }
.logo { width: 44px; height: 37px; margin-top: -4px; }
.brand { width: 167px; margin-left: 3px; }
.brand b { display: block; font: 900 22px/22px Lato, sans-serif; color: #f7901e; letter-spacing: -.6px; }
.brand span { display: block; font: 500 10.500px/12px Roboto, sans-serif; color: #4a4a4a; letter-spacing: .1px; white-space: nowrap; }
.menu { display: grid; grid-template-columns: 81px 82px 64px 82px 202px; color: #808080; letter-spacing: .12px; margin-left: -3px; white-space: nowrap; }
.menu.right { grid-template-columns: 88px 84px 55px 108px 77px 160px; margin-left: 0; }
.dd::after { content: ""; display: inline-block; border: 2.500px solid transparent; border-top: 4px solid currentColor; border-bottom: 0; margin-left: 6px; vertical-align: 2px; }

.project { margin: 8px; height: 34px; background: #8fc400; display: flex; align-items: center; padding: 0 4px 0 8px; }
.project h1 { margin: 2px 0 0; width: 314px; font-size: 18px; font-weight: 600; color: #fff; white-space: nowrap; letter-spacing: -.01px; }
button { height: 26px; margin: -1px 4px 0 0; padding: 0 0 2px; border: 1px solid #bbb; border-radius: 3px; background: linear-gradient(#fff, #e6e6e6); font: 11.500px Roboto, sans-serif; color: #404040; white-space: nowrap; letter-spacing: -.05px; }
button.off { background: #c3d68a; border-color: #b1c870; color: #84915a; }
.b1 { width: 66px; } .b2 { width: 82px; } .b3 { width: 90px; } .b4 { width: 101px; } .b5 { width: 58px; }
.b6 { width: 47px; margin-right: 0; }

.columns { display: grid; grid-template-columns: 232px 641px 214px 214px; column-gap: 8px; margin: 0 12px; height: 520px; }
.panel { border: 1px solid #c8c8c8; background: #f8f9f2; min-width: 0; }
.panel h2 { margin: 0; height: 30px; line-height: 30px; padding-left: 10px; font-size: 12.500px; font-weight: 700; background: #ccdba9; border-bottom: 1px solid #b0b5a4; letter-spacing: .12px; color: #555; }
.pal { padding: 3px; }
.search { height: 20px; border: 1px solid #bbb; border-radius: 4px; background: #fff; font: 9.500px/17px "Liberation Sans", sans-serif; color: #757575; padding-left: 5px; letter-spacing: .3px; }
.pal h3 { height: 31px; margin: 10px 0 0; background: #ebf0df; border-top: 1px solid #ccc; font-size: 12.500px; line-height: 32px; padding-left: 16px; letter-spacing: .1px; }
.items { height: 440px; background: #fff; border: 1px solid #a8a8a8; padding: 9px 4px 0 8px; }
.items li { height: 33px; display: flex; align-items: center; padding: 0 11px 9px 5px; letter-spacing: .1px; }
.items li > svg { width: 16px; height: 16px; margin-top: 2px; }
.items li.sel { background: linear-gradient(#d2e0a3, #d2e0a3) 0 0 / 100% 32px no-repeat; }
.items span { flex: 1; margin-left: 14px; }
.items li > .q { width: 11px; height: 11px; margin-top: 1px; }

.viewer { padding-left: 11px; }
.hidden-row { display: flex; align-items: center; height: 17px; margin-top: 11px; white-space: nowrap; letter-spacing: .06px; }
.hidden-row span { padding-top: 2px; }
.cb { width: 13px; height: 13px; border: 1px solid #707070; border-radius: 2px; background: #fff; flex: none; margin-bottom: 3px; }
.cb.small { display: block; margin: 3px 0 0 3px; }
.size { width: 151px; height: 30px; border: 1px solid #bbb; border-radius: 4px; background: #fff; display: flex; align-items: center; justify-content: space-between; padding: 0 4px 1px 10px; letter-spacing: .1px; }
.size svg { width: 10px; height: 6px; margin-top: 1px; }
.phone { position: relative; width: 620px; height: 342px; margin-top: 5px; padding: 10px 0 0 48px; }
.body { position: absolute; left: 0; top: 0; width: 620px; height: 342px; overflow: visible; }
.glass { position: relative; width: 526px; height: 325px; background: #000; display: flex; padding-left: 2px; }
.device { width: 478px; }
.status { height: 29px; display: flex; align-items: center; justify-content: flex-end; padding-right: 6px; color: #33b5e5; font: 15px "Open Sans", sans-serif; gap: 4px; }
.sig { width: 54px; height: 16px; margin-top: -1px; }
.title { height: 24px; background: #696969; color: #fff; font-weight: 500; line-height: 22px; padding-left: 12px; letter-spacing: -.11px; }
.form { height: 270px; background: #fff; border-top: 1px solid #ccc; display: flex; justify-content: space-between; }
.comps { padding-top: 7px; display: flex; flex-direction: column; align-items: flex-start; }
.comps > .ab { margin: 0 0 9px 2px; }
.comps > .ab:nth-child(2) { margin-bottom: 7px; }
.ab { height: 31px; background: #d6d8d7; border: 1px solid #bebfbf; border-bottom: 2px solid #b4b5b5; color: #222; text-align: center; line-height: 28px; letter-spacing: .5px; white-space: nowrap; text-indent: .5px; }
.arr { height: 39px; margin-bottom: 5px; border: 2px solid #000; background: #e7e7e7; padding: 2px; display: flex; gap: 9px; flex: none; }
.w95 { width: 95px; } .w79 { width: 79px; } .w84 { width: 84px; } .w90 { width: 90px; } .w71 { width: 71px; } .w77 { width: 77px; } .w76 { width: 76px; } .w82 { width: 82px; } .w94 { width: 94px; } .w100 { width: 100px; }
.strip { width: 17px; background: #d2e0a3; }
.keys { width: 46px; padding: 54px 0 0 15px; display: flex; flex-direction: column; gap: 82px; }
.keys svg { width: 16px; height: 18px; }
.nonvis { width: 617px; display: flex; flex-direction: column; align-items: center; margin-top: 7px; line-height: 15px; letter-spacing: .1px; }
.nonvis b { font-size: 12.500px; margin-top: 1px; letter-spacing: .2px; }
.nonvis svg { width: 16px; height: 16px; margin: 6px 0 3px; }

.tree { padding-top: 7px; white-space: nowrap; }
.tree li { height: 27px; display: flex; align-items: flex-start; }
.l0 { padding-left: 13px; }
.l1 { padding-left: 51px; }
.l1.open { padding-left: 29px; }
.l2 { padding-left: 67px; }
.m { width: 9px; height: 9px; margin: 7px 13px 0 0; }
.node { display: flex; height: 26px; align-items: flex-start; padding-top: 3px; }
.node svg { width: 16px; height: 16px; }
.node span { margin-left: 2px; line-height: 24px; letter-spacing: .05px; }
.l0 .m { margin-right: 7px; }
.picked { background: #d2e0a3; width: 72px; padding-left: 6px; }

.subject { height: 33px; line-height: 33px; padding-left: 10px; background: #ebf0df; border-bottom: 1px solid #ccc; letter-spacing: .35px; }
.props { padding: 8px 0 0 9px; letter-spacing: .15px; }
.prop label { display: block; height: 18px; line-height: 18px; padding-left: 2px; }
.h57 { height: 57px; } .h45 { height: 45px; } .h48 { height: 48px; } .h55 { height: 55px; }
.area { width: 135px; height: 27px; border: 1px solid #bbb; border-radius: 4px; background: #fff; display: flex; justify-content: flex-end; align-items: flex-end; }
.area svg { width: 10px; height: 10px; }
.color { display: flex; align-items: center; height: 18px; padding-left: 3px; }
.color i { width: 11px; height: 16px; border: 1px solid #000; background: #fff; margin-right: 9px; }
.color .pink { background: #ff4081; }
.drop { height: 23px; margin-top: -1px; border: 1px solid #bbb; border-radius: 3px; background: #fff; line-height: 20px; padding-left: 3px; white-space: nowrap; }
.drop::after { content: ""; display: inline-block; border: 2.500px solid transparent; border-top: 4px solid #333; border-bottom: 0; margin-left: 6px; vertical-align: 2px; }
.w58 { width: 58px; } .w57 { width: 57px; } .w35 { width: 35px; }
.text { width: 136px; height: 26px; margin-top: -1px; border: 1px solid #bbb; border-radius: 4px; background: #fff; padding: 0 6px; font: 9.500px/23px "Liberation Sans", sans-serif; letter-spacing: .22px; color: #333; }
.text span { display: block; overflow: hidden; white-space: nowrap; }

.downloads { height: 57px; flex: none; border-top: 1px solid #d4d4d4; display: flex; align-items: center; padding: 0 13px 2px 22px; font: 12px "Open Sans", sans-serif; color: #3c4043; }
.file { width: 12px; height: 16px; }
.fname { width: 141px; margin-left: 15px; padding-top: 2px; letter-spacing: .03px; }
.caret { width: 10px; height: 7px; margin-left: 19px; }
.dl-sep { width: 1px; height: 44px; background: #ccc; margin-left: 18px; }
.showall { width: 78px; height: 31px; border: 1px solid #d5d7da; border-radius: 4px; color: #1a73e8; text-align: center; line-height: 28px; margin-right: 13px; font-weight: 600; font-size: 11.500px; }

.taskbar { height: 40px; flex: none; display: flex; background: linear-gradient(90deg, #203640, #203542 60%, #1b2743 80%, #1b2640); color: #fff; font-family: "Open Sans", "Noto Sans", sans-serif; }
.start { width: 48px; display: flex; align-items: center; justify-content: center; }
.start svg { width: 16px; height: 16px; }
.find { width: 288px; background: #f2f2f2; border: 1px solid #bbb; border-bottom: 0; display: flex; align-items: center; color: #333; font-size: 14px; }
.mag { width: 16px; height: 16px; margin-left: 11px; }
.find span { flex: 1; margin-left: 12px; white-space: nowrap; }
.beach { width: 79px; height: 38px; }
.apps { display: flex; width: 541px; }
.apps span { width: 49px; display: flex; align-items: center; justify-content: center; position: relative; }
.apps .tv { width: 50px; padding-right: 2px; }
.apps svg { width: 24px; height: 24px; }
.apps .s18 { width: 17px; height: 17px; }
.apps .run { width: 39px; margin: 0 5px; padding-top: 2px; border-bottom: 2px solid #76b9ed; }
.apps .on { width: 48px; margin: 0 1px 0 0; background: #4c5e66; }
.badge { position: absolute; display: flex; align-items: center; justify-content: center; width: 20px; height: 20px; border-radius: 50%; background: #2c3238; border: 1px solid #8b9298; font-size: 12px; font-weight: 600; }
.badged .badge { left: 27px; top: 17px; }
.f { font: 700 13px "Open Sans", sans-serif; fill: #fff; text-anchor: middle; }
.f2 { font: 700 5.500px "Open Sans", sans-serif; fill: #fff; text-anchor: middle; }
.tray { flex: 1; display: flex; align-items: center; font-size: 12px; padding-left: 78px; }
.tray > svg { width: 16px; height: 16px; margin-right: 8px; }
.tray > .wx { width: 26px; height: 26px; margin-right: 7px; margin-top: -2px; }
.temp { width: 53px; font-size: 13px; letter-spacing: -.15px; padding-bottom: 1px; }
.tray > .t6 { margin-right: 12px; }
.tray > .t7 { margin-right: 14px; }
.eng { width: 35px; font-size: 11.500px; padding-bottom: 1px; }
.clock { width: 54px; display: flex; flex-direction: column; align-items: center; line-height: 18px; font-size: 11.500px; letter-spacing: -.2px; white-space: nowrap; padding-bottom: 2px; }
.notif { position: relative; width: 16px; height: 16px; margin-left: 17px; }
.notif svg { width: 16px; height: 16px; }
.notif .badge { left: 6px; top: 6px; width: 17px; height: 17px; font-size: 11px; }
.edge { width: 1px; height: 40px; background: #66707f; margin-left: auto; margin-right: 3px; }
```
